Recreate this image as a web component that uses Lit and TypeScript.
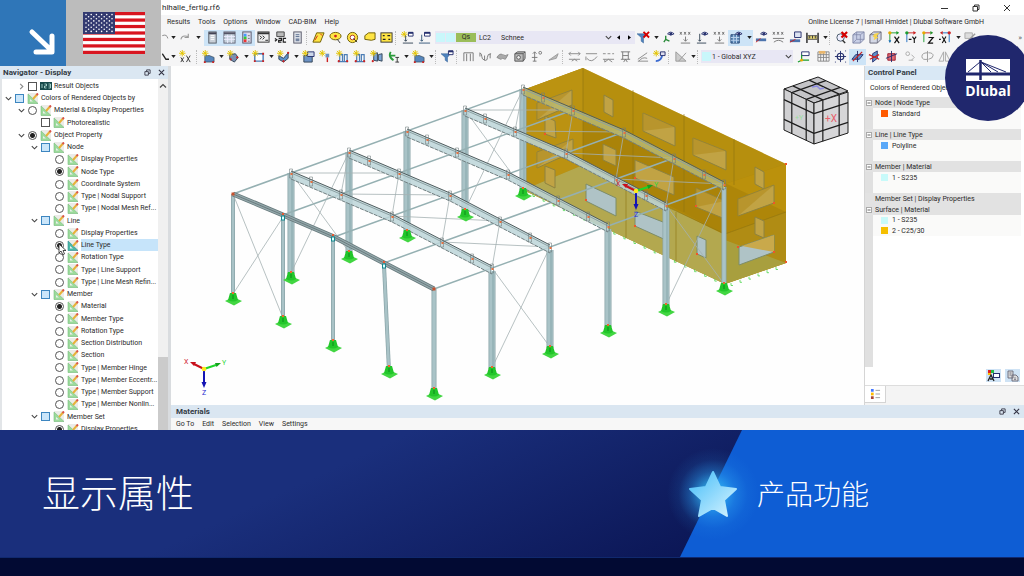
import { LitElement, html, svg, css } from "lit";
import { customElement } from "lit/decorators.js";
import { classMap } from "lit/directives/class-map.js";

type Pt = [number, number];
const pts = (p: Pt[]) => p.map((q) => q.join(",")).join(" ");

/* ---------- toolbar glyphs, all on a 14x14 grid ---------- */
const spark = svg`<path d="M3.5 0v7M0 3.5h7M1 1l5 5M6 1l-5 5" stroke="#e3c400" stroke-width="1"/>`;
const eye = svg`<path d="M6 3q3-3.500 7 0q-3.500 3-7 0z" fill="#fff" stroke="#26306e"/><circle cx="9.500" cy="3" r="1.500" fill="#26306e"/>`;
const G: Record<string, unknown> = {
  undo: svg`<path d="M0 5q5-2 6 3" fill="none" stroke="#888"/>`,
  redo: svg`<path d="M2 9q1-5 8-3M10 3v4H6" fill="none" stroke="#999" stroke-width="1.200"/>`,
  panel: svg`<rect x="3" y="1" width="8" height="12" fill="#c9d0d8" stroke="#555c66"/><path d="M3 2.500h8" stroke="#445" stroke-width="2"/><path d="M5 5h4M5 7h4M5 9h4" stroke="#fff"/>`,
  grid: svg`<rect x="1" y="1" width="12" height="12" fill="#c7d3de" stroke="#667"/><path d="M1 2.500h12" stroke="#556" stroke-width="2"/><path d="M1 6h12M1 9h12M5 4v9M9 4v9" stroke="#eef"/>`,
  colors: svg`<rect x="3" y="1" width="9" height="12" fill="#dde" stroke="#556"/><path d="M4 3h3v3H4z" fill="#49f"/><path d="M4 6h3v3H4z" fill="#3c3"/><path d="M4 9h3v3H4z" fill="#e33"/><path d="M8.500 5h2M8.500 8h2M8.500 11h2" stroke="#777"/>`,
  console: svg`<rect x="1" y="1" width="12" height="11" fill="#eee" stroke="#333"/><path d="M1 2.500h12" stroke="#333" stroke-width="2"/><path d="M3 5l2 2-2 2M6 5l2 2-2 2M9 10h3" fill="none" stroke="#222"/>`,
  script: svg`<path d="M3 1h8v5H3z" fill="#bbb" stroke="#444"/><path d="M1 8l2 1.500L1 11M5 8h3v2H5v2h3M13 8h-3v4h3" fill="none" stroke="#222" stroke-width="1.300"/>`,
  doc: svg`<rect x="3" y="1" width="8" height="12" fill="#dfe3ea" stroke="#556"/><path d="M5 4h4M5 6h4" stroke="#566b8c"/><rect x="5" y="8" width="4" height="3" fill="#7484a0"/>`,
  para: svg`<path d="M5 2h8L9 12H1z" fill="#ffe544" stroke="#6b5a00"/><path d="M3 10l3-5M9 3l2 2" stroke="#c22"/>`,
  lasso: svg`<ellipse cx="7" cy="5.500" rx="6" ry="4" fill="#ffe544" stroke="#6b5a00"/><circle cx="7" cy="5.500" r="1.500" fill="#c22"/><path d="M9 9l3 4" stroke="#333"/>`,
  target: svg`<circle cx="7" cy="7" r="5.500" fill="#ffe544" stroke="#6b5a00"/><circle cx="7" cy="7" r="2.500" fill="#fff" stroke="#a33"/><path d="M8 8l4 4" stroke="#333"/>`,
  poly: svg`<path d="M2 5l4-3h7v7l-4 1-7-1z" fill="#ffe544" stroke="#6b5a00"/>`,
  ytable: svg`<rect x="1" y="2" width="12" height="10" fill="#ffe544" stroke="#333"/><path d="M3 5h2M8 5h3M3 9h3M9 9h2" stroke="#222" stroke-width="1.500"/>`,
  loadNew: svg`${spark}<path d="M2 13h11M5 5v6M3.500 9.500L5 11l1.500-1.500" fill="none" stroke="#345"/><path d="M8 1.500h5v4H8z" fill="#fff" stroke="#26306e"/><path d="M8 2h5" stroke="#26306e" stroke-width="2"/>`,
  load: svg`<path d="M1 13h12M4 4v7M2.500 9.500L4 11l1.500-1.500" fill="none" stroke="#357"/><path d="M7 1.500h6v4H7z" fill="#fff" stroke="#26306e"/><path d="M7 2h6" stroke="#26306e" stroke-width="2"/>`,
  filterX: svg`<path d="M0 3h10L7 7v6L4.500 11V7z" fill="#4f83bd" stroke="#2c5a8f" stroke-width=".5"/><path d="M7 1l6 6M13 1L7 7" stroke="#d40000" stroke-width="2"/>`,
  filter: svg`<path d="M0 4h10L7 8v5L4.500 11V8z" fill="#4f83bd" stroke="#2c5a8f" stroke-width=".5"/><path d="M8 1h5v4H8z" fill="#fff" stroke="#26306e"/><path d="M8 1.500h5" stroke="#26306e" stroke-width="2"/>`,
  eyeSup: svg`${eye}<path d="M4 5v4l-2 3M4 9l4 2" fill="none" stroke="#2a8a3a" stroke-width="1.500"/>`,
  xxx: svg`<path d="M1 1l2 3M3 1L1 4M5.500 1l2 3M7.500 1l-2 3M10 1l2 3M12 1l-2 3" stroke="#555" stroke-width=".8"/><path d="M7 6v5M5 9l2 2 2-2M2 13h10" fill="none" stroke="#777"/>`,
  eyeLoad: svg`${eye}<path d="M4 3v8M2.500 9.500L4 11l1.500-1.500M1 13h10" fill="none" stroke="#345"/>`,
  eyeGrid: svg`<path d="M1 4h9v9H1z" fill="#5b87b5" stroke="#2d4c78"/><path d="M4 4v9M7 4v9M1 7h9M1 10h9" stroke="#bcd4ee"/>${eye}`,
  eyeBeam: svg`${eye}<path d="M1 8h11v3H1z" fill="#4d74ad"/><path d="M1 12l5-4" stroke="#c22"/>`,
  xxxBeam: svg`<path d="M1 1l2 3M3 1L1 4M5.500 1l2 3M7.500 1l-2 3M10 1l2 3M12 1l-2 3" stroke="#555" stroke-width=".8"/><path d="M1 8h12M2 12q5-4 10 0" fill="none" stroke="#777"/>`,
  diag: svg`<path d="M6 1h7v6H6z" fill="#dce3f2" stroke="#26306e"/><path d="M1 9h11v3H1z" fill="#4d74ad"/><path d="M1 12l6-3" stroke="#c22"/>`,
  dims: svg`<path d="M1 2v11M13 2v11" stroke="#222" stroke-width="1.500"/><path d="M2 5h10v4H2z" fill="#e7d774" stroke="#555"/><path d="M4 5v3M7 5v3M10 5v3" stroke="#333"/>`,
  magX: svg`<circle cx="6" cy="7" r="4" fill="#eef" stroke="#456"/><path d="M8 10l3 3" stroke="#333" stroke-width="1.500"/><path d="M7 1l6 6M13 1L7 7" stroke="#d40000" stroke-width="2.400"/>`,
  cube: svg`<path d="M1 4l4-3h8v8l-4 4H1z" fill="#c8cfe6" stroke="#8087a8"/><path d="M1 4h8l4-3M9 4v9M5 1v8h8M5 9l-4 4" fill="none" stroke="#8087a8" stroke-width=".8"/>`,
  cubeY: svg`<path d="M1 4l4-3h8v8l-4 4H1z" fill="#d4d8e6" stroke="#667"/><path d="M1 4h8l4-3M9 4v9" fill="none" stroke="#667" stroke-width=".8"/><path d="M6 3l5-1-3 4 2 1-5 3 1-3-2-1z" fill="#f5d34a"/>`,
  axX: svg`<path d="M2 2v10M2 2h9" stroke="#1c9c2e"/><circle cx="2" cy="2" r="1.800" fill="#e8a800"/><path d="M9 0l3 2-3 2z" fill="#1c9c2e"/><path d="M.500 10l1.500 3 1.500-3z" fill="#1c6cc0"/><path d="M7 6l5 7M12 6l-5 7" stroke="#111" stroke-width="1.300"/>`,
  axY: svg`<path d="M2 2v10" stroke="#1c6cc0"/><path d="M2 2h9" stroke="#c22"/><circle cx="2" cy="2" r="1.800" fill="#1c9c2e"/><path d="M9 0l3 2-3 2z" fill="#c22"/><path d="M4 9h3M8 6l2 3 2-3M10 9v4" fill="none" stroke="#111" stroke-width="1.200"/>`,
  axZ: svg`<path d="M2 2v10" stroke="#1c9c2e"/><path d="M2 2h9" stroke="#c22"/><circle cx="2" cy="2" r="1.800" fill="#e8a800"/><path d="M9 0l3 2-3 2z" fill="#1c9c2e"/><path d="M7 7h5l-5 6h5" fill="none" stroke="#111" stroke-width="1.300"/>`,
  axNX: svg`<path d="M11 2v10M11 2H3" stroke="#1c6cc0"/><circle cx="11" cy="2" r="1.800" fill="#c22"/><path d="M4 0L1 2l3 2z" fill="#c22"/><path d="M0 9h2M3.500 6l4 7M7.500 6l-4 7" stroke="#111" stroke-width="1.200"/>`,
  faded: svg`<path d="M1 2h8v6H1z" fill="#ddd" stroke="#aaa"/><path d="M5 10l7-7" stroke="#999" stroke-width="1.500"/>`,
  lineNew: svg`<path d="M0 4l4 6h4" fill="none" stroke="#222" stroke-width="1.500"/>`,
  xxNew: svg`${spark}<path d="M2 8l3 5M5 8l-3 5M8 6l4 7M12 6l-4 7" stroke="#333"/>`,
  matNew: svg`<path d="M3 6h5l5 2v5H3z" fill="#5585bb" stroke="#345" stroke-width=".7"/><path d="M2 12h2v2H2zM11 12h2v2h-2z" fill="#c22"/>${spark}`,
  nodeNew: svg`<path d="M3 5l6-1 3 4-4 5-5-3z" fill="#7b90b3" stroke="#345"/><circle cx="4" cy="10" r="1.200" fill="#c22"/><circle cx="11" cy="8" r="1.200" fill="#c22"/>${spark}`,
  frameNew: svg`<path d="M3 4h9v8H3z" fill="#fff" stroke="#4b7db5" stroke-width="1.500"/><path d="M2 11h2v2H2zM11 11h2v2h-2zM11 3h2v2h-2z" fill="#c22"/>${spark}`,
  surfNew: svg`<path d="M2 6l5 3 5-6v6l-5 4-5-3z" fill="#5f93cc" stroke="#345"/><circle cx="7" cy="12" r="1.200" fill="#c22"/><circle cx="12" cy="3" r="1.200" fill="#c22"/>${spark}`,
  boxNew: svg`<path d="M2 6h9v7H2z" fill="#6c92c4" stroke="#345"/><path d="M6 2h7v5H6z" fill="#cdd7ea" stroke="#26306e"/>${spark}`,
  pinNew: svg`<path d="M7 4h4v4H7z" fill="#6c92c4"/><path d="M9 8v5" stroke="#c22" stroke-width="1.500"/>${spark}`,
  ribNew: svg`<path d="M4 12V5h3v7M9 12V5h3v7M2 12.500h11" fill="none" stroke="#4b7db5" stroke-width="1.300"/><circle cx="3" cy="12" r="1.200" fill="#c22"/><circle cx="12" cy="12" r="1.200" fill="#c22"/>${spark}`,
  wallNew: svg`<path d="M4 4l4-1v9l-4-1zM9 5l4-1v8l-4-1z" fill="#7da5d6" stroke="#345"/><circle cx="3" cy="12" r="1.200" fill="#c22"/>${spark}`,
  supNew: svg`<path d="M4 2q-3 5 3 9M4 6h5" fill="none" stroke="#2a9a3a" stroke-width="2"/><path d="M9 8h4M11 8v5M9 13h4" stroke="#333"/>`,
  gate: svg`<path d="M2 12V3h10v9M5 12V4M9 12V4" fill="none" stroke="#777"/>`,
  curve: svg`<path d="M1 3q2 1 2 4t3 4 3-3 4-4M1 3v4M12 4v5M6 6v5" fill="none" stroke="#777"/>`,
  slab: svg`<path d="M1 8q3-5 6-3t6 0l-3 5q-3-2-5 0z" fill="#aaa" stroke="#888"/>`,
  box: svg`<path d="M2 4h9v8H2zM2 4l3-2h8l-2 2M13 2v7l-2 3" fill="#bbb" stroke="#555"/><circle cx="6" cy="8" r="2" fill="#eee" stroke="#555"/>`,
  reac: svg`<path d="M5 2v10M3 4l2-2 2 2M2 8h6M3 12h4" fill="none" stroke="#777"/><circle cx="11" cy="3" r="1.500" fill="none" stroke="#777"/>`,
  slope: svg`<path d="M2 11l10-7-2 5z" fill="#bbb" stroke="#999"/>`,
  beam1: svg`<path d="M1 4h12M1 10h12M3 2L1 4l2 2M11 2l2 2-2 2M4 12l3-2 3 2" fill="none" stroke="#888"/>`,
  beam2: svg`<path d="M1 4h12M2 9q5 6 11-2M1 7v4" fill="none" stroke="#888"/>`,
  beam3: svg`<path d="M1 4h3M6 4h3M11 4h2M1 10h12M3 10v3l4-3 4 3" fill="none" stroke="#888"/>`,
  beam4: svg`<path d="M2 2h10M4 2v8M10 2v8M2 10h10M4 6h6M5 13l2-3 2 3" fill="none" stroke="#777"/>`,
  beam5: svg`<path d="M2 10L12 3M2 12h11M3 12q4-5 9-3" fill="none" stroke="#888"/>`,
  pen: svg`<path d="M3 12q6 0 7-7" fill="none" stroke="#3a6ad0" stroke-width="2"/><path d="M8 2h5v4H8z" fill="#dde" stroke="#26306e"/>${spark}`,
  tri: svg`<path d="M2 2v10h11zM5 12l8-9" fill="#ccc" stroke="#999"/>`,
  ucs: svg`<path d="M5 2h8v4H5z" fill="#fff" stroke="#26306e"/><path d="M5 5v6h8M5 11l-4 2" fill="none" stroke="#1a9c2e" stroke-width="1.300"/><circle cx="5" cy="11" r="1.500" fill="#e8a800"/>`,
  mesh: svg`<path d="M1 2h12v10H1zM1 5h12M1 8h12M4 2v10M7 2v10M10 2v10" fill="none" stroke="#888"/><path d="M2 1h7v3H2z" fill="#e9b66b"/>`,
  snap: svg`<circle cx="7" cy="7" r="3.500" fill="none" stroke="#26306e" stroke-width="1.300"/><path d="M7 1v12M1 7h12" stroke="#26306e"/><path d="M1 1h1M12 1h1M1 13h1M12 13h1" stroke="#26306e"/>`,
  plane1: svg`<path d="M1 10l4-5h8l-4 5z" fill="#5f93cc" stroke="#26306e"/><path d="M7 1v12" stroke="#26306e"/><path d="M2 12l10-10" stroke="#c22" stroke-width="1.300"/>`,
  plane2: svg`<path d="M5 4l5-3v8l-5 4z" fill="#5f93cc" stroke="#26306e"/><path d="M2 10l10-5M1 5l11 5" stroke="#c22" stroke-width="1.300"/>`,
  plane3: svg`<path d="M3 4h8v7H3z" fill="#e06a75" stroke="#9a1a2a"/><path d="M1 9l12-5M7 1v12" stroke="#26306e"/>`,
  rot: svg`<circle cx="4" cy="4" r="2" fill="none" stroke="#aaa"/><path d="M8 5l3 3-3 3M5 11h5" fill="none" stroke="#aaa"/>`,
  circ: svg`<path d="M7 3q-6 0-6 4t6 3M8 10q5-1 5-4T8 3M7 1v12" fill="none" stroke="#999"/>`,
  mirror: svg`<path d="M6 2v10H1zM8 2v10h5z" fill="none" stroke="#aaa"/>`,
};

type Item = string | number;
// a name draws its glyph button, a number leaves room, "v" is a caret, "|" a divider, "*" marks an active button
const ROW1A: Item[] = ["undo", "v", "redo", "v", 2, "*panel", "*grid", "*colors", "console", "script", "doc", "|", "para", "lasso", "target", "poly", "ytable", "|", "loadNew", "load", 2];
const ROW1B: Item[] = ["filterX", "v", "eyeSup", "xxx", "eyeLoad", "xxx", "*eyeGrid", "*v", "eyeBeam", "xxxBeam", "diag", "dims", "v", "|", "magX", "cube", "cubeY", 2, "axX", "axY", "axZ", "axNX", "v", "faded"];
const ROW2A: Item[] = ["lineNew", "v", "xxNew", 2, "|", "matNew", "v", "nodeNew", "v", "frameNew", "v", "surfNew", "v", "boxNew", "pinNew", "ribNew", "ribNew", "wallNew", "supNew", "v", "matNew", "v", "|", "filter", "|", "gate", "curve", "slab", "box", "reac", "slope", "|", "beam1", "beam2", "beam3", "beam4", "beam5", "pen", "|", "tri", "v", "|"];
const ROW2B: Item[] = [2, "ucs", 3, "mesh", "snap", "*plane1", "plane2", "plane3", 2, "rot", "circ", "mirror"];

const chevron = svg`<path d="M2 3.500l3 3 3-3" fill="none" stroke="#444" stroke-width="1.200"/>`;

@customElement("tool-strip")
export class ToolStrip extends LitElement {
  static properties = { items: { attribute: false } };
  declare items: Item[];
  static styles = css`
    :host { display: flex; align-items: center; flex: none; }
    button { border: 0; padding: 0; background: none; width: 17px; height: 16px; display: grid; place-items: center; flex: none; }
    .narrow { width: 8px; }
    .on { background: #cde4f7; }
    .bar { width: 4px; height: 14px; flex: none; border-left: 1px dotted #bbb; box-sizing: border-box; }
    .room { flex: none; }
  `;
  render() {
    return this.items.map((it) => {
      if (typeof it === "number") return html`<span class="room" style="width:${it}px"></span>`;
      if (it === "|") return html`<span class="bar"></span>`;
      const on = it.startsWith("*");
      const n = on ? it.slice(1) : it;
      if (n === "v")
        return html`<button class=${classMap({ narrow: true, on })} aria-label="More"><svg width="5" height="3" viewBox="0 0 6 4"><path d="M0 0h6L3 4z" fill="#222" /></svg></button>`;
      const narrow = n === "undo" || n === "lineNew";
      return html`<button class=${classMap({ narrow, on })} aria-label=${n}>
        <svg width=${narrow ? 7 : 13} height="13" viewBox=${narrow ? "0 0 7 14" : "0 0 14 14"}>${G[n]}</svg>
      </button>`;
    });
  }
}

/* ---------- 3D model ---------- */
const N = 6;
const OFF: Pt[] = [[0, 0], [20, 8], [50, 21], [101, 43], [151, 69], [181, 85], [201, 95]];
const at = (f: number, k: number): Pt => [233 + 58 * f + OFF[k][0], 194 - 21 * f + OFF[k][1]];
const COLH = 104;

@customElement("model-view")
export class ModelView extends LitElement {
  static styles = css`
    :host { display: block; overflow: hidden; background: #fefefe; }
    svg { display: block; width: 100%; height: 100%; }
    text { font: 7px Roboto, sans-serif; }
    .face { font-size: 10px; }
  `;
  line(a: Pt, b: Pt, c = "#a5b1b3", w = 0.8) {
    return svg`<line x1=${a[0]} y1=${a[1]} x2=${b[0]} y2=${b[1]} stroke=${c} stroke-width=${w}/>`;
  }
  support([x, y]: Pt) {
    return svg`<path d="M${x - 8} ${y + 3}l8-4 9 4-8 4.500z" fill="#42d642"/><path d="M${x - 3} ${y - 5}h6l2 7q-5 3-10 0z" fill="#22c62a"/><path d="M${x - 1} ${y - 3}h2v4h-2z" fill="#17a822"/><rect x=${x - 1} y=${y - 6} width="2" height="2" fill="#f2642c"/>`;
  }
  column(a: Pt, b: Pt, w: number) {
    return svg`${this.line(a, b, "#8ba5a9", w)}${this.line(a, b, "#a9c3c7", w - 1.5)}${w > 5 ? this.line([a[0] + 1, a[1]], [b[0] + 1, b[1]], "#93b0b4", 1.5) : ""}`;
  }
  beam(f: number) {
    const p = [0, 3, 6].map((k) => at(f, k));
    if (f === 0) {
      const q = pts([0, 2, 3, 4, 6].map((k) => at(0, k)));
      return svg`<polyline points=${q} fill="none" stroke="#67797c" stroke-width="5"/><polyline points=${q} fill="none" stroke="#93a8ab" stroke-width="3.500"/><polyline points=${q} fill="none" stroke="#617074" stroke-width=".8"/>`;
    }
    const sh = (d: number) => pts(p.map(([x, y]) => [x, y + d] as Pt));
    const body = f === 5 ? "#b9b76e" : "#bcd5d8";
    return svg`
      <polygon points="${sh(-2)} ${pts([...p].reverse().map(([x, y]) => [x, y + 6] as Pt))}" fill=${body} fill-opacity=".85"/>
      <polyline points=${sh(-2)} fill="none" stroke="#505c5e" stroke-width="1"/>
      <polyline points=${sh(0)} fill="none" stroke="#8ba0a2" stroke-width="1"/>
      <polyline points=${sh(6)} fill="none" stroke="#717f81" stroke-width="1" stroke-dasharray="4 1"/>
      ${OFF.map((_, k) => {
        const [x, y] = at(f, k);
        return svg`<path d="M${x - 1.5} ${y - 4}h3v9h-3z" fill="none" stroke="#6d7a7c" stroke-opacity=".8" stroke-width=".7"/><rect x=${x - 0.5} y=${y} width="2" height="2" fill="#e9703f"/>`;
      })}`;
  }
  brace(f: number) {
    const k = [0, 2, 3, 4, 6];
    const out: unknown[] = [];
    for (let i = 0; i < 4; i++) {
      out.push(this.line(at(f, k[i]), at(f + 1, k[i + 1])));
      out.push(this.line(at(f + 1, k[i]), at(f, k[i + 1])));
    }
    for (const s of [0, 6]) {
      const a = at(f, s), b = at(f + 1, s);
      out.push(this.line(a, [b[0], b[1] + COLH - 4]));
      out.push(this.line(b, [a[0], a[1] + COLH - 4]));
    }
    return out;
  }
  axes(x: number, y: number, s: number) {
    return svg`
      <path d="M${x} ${y}l-10-5" stroke="#c8101c" stroke-width="2"/><path d="M${x - 14} ${y - 7}l6 0-2 4z" fill="#c8101c"/>
      <path d="M${x} ${y}l12-4" stroke="#1ed42a" stroke-width="2"/><path d="M${x + 17} ${y - 6}l-6 0 1.500 4z" fill="#12a31c"/>
      <path d="M${x} ${y}v${s - 4}" stroke="#1414b4" stroke-width="2"/><path d="M${x - 2.5} ${y + s - 5}h5l-2.500 6z" fill="#1414b4"/>
      <circle cx=${x} cy=${y} r="2.300" fill="#ffe81a"/>
      <text x=${x - 20} y=${y - 5} fill="#d02030">X</text>
      <text x=${x + 18} y=${y - 4} fill="#34d840">Y</text>
      <text x=${x - 2} y=${y + s + 8} fill="#2a2ad0">Z</text>`;
  }
  cubeFace(o: Pt, u: Pt, v: Pt, fill: string) {
    const m = (a: number, b: number): Pt => [o[0] + u[0] * a + v[0] * b, o[1] + u[1] * a + v[1] * b];
    return svg`<polygon points=${pts([m(0, 0), m(1, 0), m(1, 1), m(0, 1)])} fill=${fill} stroke="#1c1c1c"/>
      ${[0.26, 0.74].map((t) => svg`${this.line(m(t, 0), m(t, 1), "#1c1c1c", 1.2)}${this.line(m(0, t), m(1, t), "#1c1c1c", 1.2)}`)}`;
  }
  render() {
    const gold: Pt[][] = [
      [[537, 103], [572, 90], [572, 105], [537, 120]],
      [[545, 116], [555, 121], [556, 138], [545, 134]],
      [[537, 152], [573, 139], [573, 152], [537, 168]],
      [[545, 166], [555, 170], [555, 188], [545, 183]],
      [[604, 95], [613, 100], [613, 117], [604, 112]],
      [[603, 144], [616, 150], [616, 166], [603, 160]],
      [[643, 113], [675, 127], [675, 146], [643, 131]],
      [[693, 138], [726, 151], [726, 170], [693, 155]],
      [[635, 160], [674, 177], [674, 195], [635, 178]],
      [[696, 188], [725, 201], [725, 219], [696, 207]],
      [[755, 167], [764, 172], [764, 189], [755, 184]],
      [[738, 199], [774, 185], [774, 203], [738, 216]],
      [[755, 217], [764, 221], [764, 238], [755, 234]],
    ];
    const blue: Pt[][] = [
      [[586, 184], [616, 198], [616, 216], [586, 201]],
      [[635, 211], [668, 224], [668, 241], [635, 226]],
      [[697, 236], [706, 240], [706, 258], [697, 254]],
      [[739, 247], [774, 235], [774, 252], [739, 265]],
    ];
    const frames = Array.from({ length: N }, (_, f) => f);
    const posts: [Pt, Pt][] = [[[283, 217], [283, 321]], [[333, 238], [333, 345]], [[384, 265], [389, 371]]];
    const feet = [...frames.map((f) => at(f, 0)), ...frames.map((f) => at(f, 6))].map(([x, y]) => [x, y + COLH] as Pt);
    return html`<svg viewBox="171 66 693 339" preserveAspectRatio="xMidYMid meet" role="img" aria-label="Steel hall model">
      <polygon points="523,90 583,68 786,164 786,263 725,284 523,190" fill="#b18a0c"/>
      <polygon points="523,90 583,68 583,165 523,190" fill="#bb9212"/>
      <polygon points="523,90 583,68 786,164 725,184" fill="#bc9310" opacity=".5"/>
      <polygon points="725,184 786,164 786,212 725,234" fill="#bb910c"/>
      <polygon points="583,116 786,212 725,234 670,206 583,165" fill="#a57f08" opacity=".6"/>
      <polygon points="523,190 583,165 725,235 725,284" fill="#b3a84f"/>
      <polygon points="725,234 786,212 786,263 725,284" fill="#b08c14"/>
      <polygon points="725,284 725,240 786,263" fill="#a6a64c" opacity=".75"/>
      <path d="M583 68V165M633 90V187M684 114V212M734 139V185M626 187V238M676 212V262M523 139l202 95 61-22" fill="none" stroke="#8d7413" stroke-width=".6"/>
      ${gold.map((w) => svg`<polygon points=${pts(w)} fill="#c1a344" stroke="#8d8240"/>`)}
      ${[0, 2, 6, 7, 9, 11].map((i) => svg`<polygon points=${pts([gold[i][0], gold[i][1], gold[i][3]])} fill="#b08b1c" opacity=".55"/>`)}
      ${blue.map((w) => svg`<polygon points=${pts(w)} fill="#afc3c6" stroke="#7d8c68"/>`)}
      <polygon points="742,246 774,235 774,252" fill="#c9a94b"/>
      ${Array.from({ length: 19 }, (_, i) => svg`<path d="M${533 + i * 10.1} ${194 + i * 4.7}v2.500h2" fill="none" stroke="#4fd64f" stroke-width=".8"/>`)}
      ${Array.from({ length: 6 }, (_, i) => svg`<path d="M${731 + i * 9} ${283 - i * 3.2}v2.500h2" fill="none" stroke="#4fd64f" stroke-width=".8"/>`)}
      ${[[545, 134], [586, 200], [696, 206], [697, 254], [738, 247], [774, 203], [774, 252], [786, 164], [786, 262], [635, 178], [635, 226]].map(([x, y]) => svg`<rect x=${x - 1} y=${y - 1} width="2" height="2" fill="#f0552a"/>`)}
      ${frames.map((f) => { const [x, y] = at(f, 0); return this.column([x, y], [x, y + COLH - 3], f ? 7 : 4); })}
      ${this.line(at(0, 0), [283, 318])}${this.line([283, 217], [233, 294])}
      ${[0, 2, 3, 4, 6].map((k) => this.line(at(0, k), at(5, k), "#95b0b2", 1.5))}
      ${this.brace(1)}${this.brace(4)}
      ${[5, 4, 3, 2, 1].map((f) => {
        const [x, y] = at(f, 6);
        return svg`${this.column([x, y + 3], [x, y + COLH - 3], f === 5 ? 5 : 7)}${this.beam(f)}`;
      })}
      ${posts.map(([a, b]) => svg`${this.column(a, b, 4)}${this.support(b)}`)}
      ${this.column(at(0, 6), [434, 390], 5)}
      ${this.beam(0)}
      ${posts.map(([a]) => svg`<rect x=${a[0] - 1.5} y=${a[1] - 1} width="3" height="4" fill="#dff" stroke="#12858c"/><rect x=${a[0] - 1} y=${a[1] - 4} width="2" height="2" fill="#e55a30"/>`)}
      ${feet.map((p) => this.support(p))}
      ${[[233, 194], [434, 289]].map(([x, y]) => svg`<rect x=${x - 1.5} y=${y - 1.5} width="3" height="3" fill="#c8502c"/>`)}
      ${this.axes(204, 369, 18)}
      ${this.axes(636, 191, 18)}
      ${this.cubeFace([784, 89], [34, -12], [30, 14], "#c4c4c7")}
      ${this.cubeFace([784, 89], [30, 14], [0, 41], "#d0d0d2")}
      ${this.cubeFace([814, 103], [34, -11], [0, 41], "#d6d6d8")}
      <text class="face" x="825" y="122" fill="#e8606a">+X</text>
      <text x="795" y="120" fill="#9adf9f">+Y</text>
      <path d="M812 87l5-1 3 3 4-1" fill="none" stroke="#8a8ae0" stroke-width="1.500"/>
    </svg>`;
  }
}

/* ---------- navigator ---------- */
type Row = { l: number; t: string; k: "c" | "r"; on?: boolean; ch?: "open" | "shut"; blue?: boolean; sel?: boolean; num?: boolean; g?: string };
const rad = (t: string, g: string, on = false, sel = false): Row => ({ l: 3, t, k: "r", g, on, sel });
const box = (l: number, t: string): Row => ({ l, t, k: "c", ch: "open", blue: true });
const TREE: Row[] = [
  { l: 1, t: "Result Objects", k: "c", ch: "shut", num: true },
  box(0, "Colors of Rendered Objects by"),
  { l: 1, t: "Material & Display Properties", k: "r", ch: "open", g: "by" },
  { l: 2, t: "Photorealistic", k: "c" },
  { l: 1, t: "Object Property", k: "r", ch: "open", on: true, g: "by" },
  box(2, "Node"),
  rad("Display Properties", "node"), rad("Node Type", "node", true), rad("Coordinate System", "node"), rad("Type | Nodal Support", "node"), rad("Type | Nodal Mesh Ref...", "node"),
  box(2, "Line"),
  rad("Display Properties", "line"), rad("Line Type", "line", true, true), rad("Rotation Type", "line"), rad("Type | Line Support", "line"), rad("Type | Line Mesh Refin...", "line"),
  box(2, "Member"),
  rad("Material", "member", true), rad("Member Type", "member"), rad("Rotation Type", "member"), rad("Section Distribution", "member"), rad("Section", "member"), rad("Type | Member Hinge", "member"), rad("Type | Member Eccentr...", "member"), rad("Type | Member Support", "member"), rad("Type | Member Nonlin...", "member"),
  box(2, "Member Set"),
  rad("Display Properties", "set", true),
];

const winBtns = html`<svg width="7" height="7" viewBox="0 0 8 8"><path d="M1 3h4v4H1zM3 3V1h4v4H5" fill="none" stroke="#334" /></svg>
  <svg width="7" height="7" viewBox="0 0 8 8"><path d="M1 1l6 6M7 1L1 7" stroke="#334" stroke-width="1.300" /></svg>`;

@customElement("nav-panel")
export class NavPanel extends LitElement {
  static styles = css`
    :host { display: flex; flex-direction: column; min-height: 0; background: #fff; border-right: 3px solid #d9dcdf; box-sizing: border-box; }
    .head { display: flex; align-items: center; gap: 7px; height: 13px; padding: 0 3px; background: #dbe7f2; font-size: 8px; font-weight: 700; flex: none; color: #333b44; }
    h2 { font: inherit; margin: 0; flex: 1; }
    .body { display: flex; flex: 1; min-height: 0; overflow: hidden; border-left: 2px solid #e2e5e8; }
    ul { list-style: none; margin: 0; padding: 1px 0 0; flex: 1; min-width: 0; display: grid; grid-auto-rows: 12px 12px 12px 13px; align-content: start; }
    li { display: flex; align-items: center; min-width: 0; }
    .l1 { padding-left: 13px; } .l2 { padding-left: 26px; } .l3 { padding-left: 40px; }
    .chev { width: 12px; display: grid; place-items: center; flex: none; }
    input { appearance: none; width: 9px; height: 9px; margin: 0 3px 0 1px; border: 1px solid #555; box-sizing: border-box; flex: none; background: #fff; }
    input[type="radio"] { border-radius: 50%; }
    input[type="radio"]:checked { background: radial-gradient(circle, #222 0 2px, #fff 3px); }
    .blue { background: #cbe6fa; border-color: #3d86c0; }
    label { display: flex; align-items: center; gap: 2px; flex: 1; min-width: 0; white-space: nowrap; height: 12px; font-size: 7px; line-height: 12px; color: #2a2a2a; }
    label svg { flex: none; }
    .sel span { background: #c6e4fa; flex: 1; }
    .scroll { width: 10px; background: #f0f0f0; display: flex; flex-direction: column; align-items: center; justify-content: space-between; padding-top: 4px; flex: none; }
    .thumb { width: 10px; height: 21%; background: #cbcbcb; }
  `;
  icon(sel?: boolean) {
    return html`<svg width="12" height="11" viewBox="0 0 12 11"><rect x="1" y="0" width="10" height="11" fill="#ecece8" /><path d="M1 1v9.500h10z" fill=${sel ? "#4bb8a6" : "#9bdb9b"} stroke=${sel ? "#2c8b96" : "#78bd80"} stroke-width=".6" /><path d="M3 6v2.500h3z" fill="#eee" /><path d="M6 6l4-4.500" stroke="#e8b23a" stroke-width="2" /><path d="M9.500 2l1.500-1.500" stroke="#d9534a" stroke-width="2" /></svg>`;
  }
  render() {
    return html`<div class="head"><h2>Navigator - Display</h2>${winBtns}</div>
      <div class="body">
        <ul>
          ${TREE.map((r, i) => html`<li class="l${r.l}">
            <span class="chev">${r.ch ? html`<svg width="9" height="9" viewBox="0 0 10 10">${r.ch === "open" ? chevron : svg`<path d="M3.500 2l3 3-3 3" fill="none" stroke="#888" stroke-width="1.200"/>`}</svg>` : ""}</span>
            <input id="n${i}" type=${r.k === "c" ? "checkbox" : "radio"} name=${r.g ?? "n" + i} class=${classMap({ blue: !!r.blue })} ?checked=${!!r.on} />
            <label for="n${i}" class=${classMap({ sel: !!r.sel })}>
              ${r.num ? html`<svg width="12" height="8" viewBox="0 0 12 8"><rect width="12" height="8" fill="#16494a" /><path d="M2 2v4M4.500 2h2v2h-2v2h2M8.500 2h2v4h-2M8.500 4h2" fill="none" stroke="#bfe9df" stroke-width=".8" /></svg>` : this.icon(r.sel)}<span>${r.t}</span>
            </label>
          </li>`)}
        </ul>
        <div class="scroll"><svg width="8" height="6" viewBox="0 0 8 6"><path d="M1 4.500l3-3 3 3" fill="none" stroke="#444" stroke-width="1.200" /></svg><div class="thumb"></div></div>
      </div>`;
  }
}

/* ---------- control panel ---------- */
type Cp = { h?: string; c?: string; t?: string; open?: boolean };
const CP: Cp[] = [
  { h: "Node | Node Type", open: true }, { c: "#ff5a00", t: "Standard" }, {},
  { h: "Line | Line Type", open: true }, { c: "#5aa8f8", t: "Polyline" }, {},
  { h: "Member | Material", open: true }, { c: "#c8fafa", t: "1 - S235" }, {},
  { h: "Member Set | Display Properties" },
  { h: "Surface | Material", open: true }, { c: "#c8fafa", t: "1 - S235" }, { c: "#f5bf00", t: "2 - C25/30" },
];

@customElement("control-panel")
export class ControlPanel extends LitElement {
  static styles = css`
    :host { display: flex; flex-direction: column; min-height: 0; font-size: 7px; color: #2a2a2a; background: #fff; border-left: 1px solid #d5d5d5; box-sizing: border-box; }
    h2 { margin: 0; font-size: 8px; font-weight: 700; line-height: 14px; padding: 0 3px; background: #d9e8f5; color: #333b44; }
    p { margin: 0; line-height: 17px; padding-left: 5px; white-space: nowrap; }
    .list { flex: 1; min-height: 0; margin: 0 3px 19px 0; display: grid; grid-auto-rows: 11px 11px 10px; align-content: start; background: linear-gradient(90deg, #e0e0e0 0 8px, #fff 8px); }
    .list > div { display: flex; align-items: center; white-space: nowrap; line-height: 10px; margin-left: 8px; }
    .list > .h { margin-left: 0; background: #e2e2e2; gap: 3px; padding-left: 1px; }
    .h svg, .h i { width: 6px; height: 6px; flex: none; }
    .row { gap: 4px; padding-left: 8px; background: #fafaf9; }
    .sw { width: 7px; height: 7px; }
    .tools { display: flex; justify-content: flex-end; gap: 4px; padding: 0 4px 3px; margin-top: -17px; }
    button { border: 0; padding: 0; background: #cfe3f5; width: 15px; height: 13px; display: grid; place-items: center; }
    .tabs { background: #f4f4f4; height: 20px; border-top: 1px solid #ddd; box-sizing: border-box; flex: none; }
    .tab { background: #fff; width: 21px; height: 17px; border: solid #d4d4d4; border-width: 0 1px 1px 0; }
  `;
  render() {
    return html`<h2>Control Panel</h2>
      <p>Colors of Rendered Objects by</p>
      <div class="list">
        ${CP.map((r) => r.h
          ? html`<div class="h">${r.open ? html`<svg viewBox="0 0 6 6"><rect x=".5" y=".5" width="5" height="5" fill="#fff" stroke="#aaa" /><path d="M1.500 3h3" stroke="#666" /></svg>` : html`<i></i>`}${r.h}</div>`
          : html`<div class="row">${r.t ? html`<span class="sw" style="background:${r.c}"></span>${r.t}` : ""}</div>`)}
      </div>
      <div class="tools">
        <button aria-label="Edit colors"><svg width="13" height="12" viewBox="0 0 13 12"><path d="M1 0h3v3H1z" fill="#d22" /><path d="M4 0h3v3H4z" fill="#2b4" /><path d="M1 3h3v2H1z" fill="#fb0" /><path d="M1 11l3-6 3 6M3 9h3" fill="none" stroke="#222" stroke-width="1.300" /><rect x="6.500" y="3.500" width="6" height="4" fill="#fff" stroke="#26306e" /></svg></button>
        <button aria-label="Copy settings"><svg width="12" height="12" viewBox="0 0 12 12"><path d="M1 1h5v7H1zM2.500 3h2M2.500 5h2M5 5h4l2 2v4H5z" fill="#ddd" stroke="#667" stroke-width=".9" /><path d="M7 8h2M7 9.500h2" stroke="#667" stroke-width=".7" /></svg></button>
      </div>
      <div class="tabs"><button class="tab" aria-label="Legend"><svg width="11" height="10" viewBox="0 0 12 11"><path d="M1 0h3v3H1z" fill="#47f" /><path d="M1 4h3v3H1z" fill="#fb0" /><path d="M1 8h3v3H1z" fill="#a43" /><path d="M6 1.500h5M6 5.500h5M6 9.500h5" stroke="#999" /></svg></button></div>`;
  }
}

/* ---------- page ---------- */
@customElement("app-root")
export class AppRoot extends LitElement {
  static styles = css`
    :host { display: flex; flex-direction: column; height: 100vh; overflow: hidden; position: relative; background: #020a33; font-family: Roboto, "Noto Sans CJK SC", sans-serif; font-size: 7px; color: #2a2a2a; }
    button { font: inherit; color: inherit; border: 0; background: none; padding: 0; }
    .top { display: flex; height: 66px; flex: none; background: #f5f5f6; }
    .mark { width: 66px; background: #2f76b8; display: grid; place-items: center; padding: 18px 0 0 18px; box-sizing: border-box; flex: none; }
    .flag { width: 95px; background: #bcbcbc; display: grid; place-items: center; flex: none; }
    .chrome { flex: 1; min-width: 0; display: flex; flex-direction: column; overflow: hidden; }
    .title { height: 15px; background: #fff; display: flex; align-items: center; justify-content: space-between; padding: 0 12px 0 1px; font-size: 8px; }
    .wins { display: flex; gap: 21px; }
    .menu { height: 13px; display: flex; align-items: center; gap: 8px; padding: 0 40px 0 6px; white-space: nowrap; }
    .menu .lic { margin-left: auto; }
    .bar { height: 19px; display: flex; align-items: center; }
    .combo { display: flex; align-items: center; background: #e8e7f4; height: 13px; flex: none; }
    .case { width: 200px; }
    .cs { width: 92px; }
    .chip { width: 9px; height: 9px; background: #c9f7fb; margin-left: 1px; flex: none; }
    .qs { background: #9bbd5a; width: 20px; line-height: 9px; text-align: center; margin: 0 3px 0 1px; }
    .num { width: 22px; }
    .cs .chip { margin: 0 1px; }
    select { appearance: none; border: 0; background: none; font: inherit; color: inherit; padding: 0; margin: 0; flex: 1; min-width: 0; }
    .step { width: 11px; display: grid; place-items: center; }
    .more { margin-left: auto; padding-right: 2px; color: #666; font-size: 8px; }
    .work { flex: 1; min-height: 0; display: grid; grid-template-columns: 171px minmax(0, 1fr) 160px; grid-template-rows: minmax(0, 1fr) 25px; }
    nav-panel { grid-row: 1 / 3; }
    .mat { grid-column: 2 / 4; background: #f7f7f7; }
    .mhead { display: flex; align-items: center; gap: 7px; height: 13px; background: #dae6f1; padding: 0 4px 0 5px; }
    h2 { margin: 0; font-size: 8px; flex: 1; color: #333b44; }
    .mmenu { display: flex; gap: 8px; padding-left: 5px; height: 12px; align-items: center; }
    .banner { height: 128px; flex: none; display: flex; background: linear-gradient(155deg, #1a2f7c 0 32%, #0a1452 78%, #13236c); border-bottom: 1px solid #10296e; box-sizing: border-box; color: #fff; font-family: "Noto Sans CJK SC", sans-serif; font-weight: 300; }
    h1 { flex: 1; margin: 0; padding-left: 42px; font-size: 38px; font-weight: 300; line-height: 122px; }
    .kind { position: relative; width: 344px; display: flex; align-items: center; font-size: 28px; line-height: 124px; }
    .kind::before { content: ""; position: absolute; inset: 0; background: #0e5dd4; clip-path: polygon(62px 0, 100% 0, 100% 100%, 0 100%); }
    .kind > * { position: relative; }
    .kind svg { margin-left: -17px; margin-right: -6px; flex: none; }
    .kind span { margin-top: -2px; }
    .foot { height: 18px; flex: none; }
    .logo { position: absolute; top: 35px; right: -7px; width: 86px; height: 86px; border-radius: 50%; background: #20276d; color: #fff; display: flex; flex-direction: column; align-items: center; padding-top: 24px; box-sizing: border-box; }
    .logo strong { font-family: "Open Sans", sans-serif; font-size: 14px; line-height: 20px; }
    .cursor { position: absolute; left: 58px; top: 243px; }
  `;
  flag() {
    return html`<svg width="62" height="42" viewBox="0 0 62 42" role="img" aria-label="English">
      <rect width="62" height="42" fill="#fff" />
      ${[0, 1, 2, 3, 4, 5, 6].map((i) => svg`<rect y=${i * 6.46} width="62" height="3.230" fill="#d8151f"/>`)}
      <rect width="32" height="22" fill="#333a70" />
      ${[0, 1, 2, 3, 4, 5, 6, 7, 8].map((r) => (r % 2 ? [1, 2, 3, 4, 5] : [0, 1, 2, 3, 4, 5]).map((c) => svg`<circle cx=${(r % 2 ? 0.4 : 3) + c * 5.2} cy=${2.6 + r * 2.1} r=".8" fill="#fff"/>`))}
    </svg>`;
  }
  render() {
    const down = html`<svg width="9" height="9" viewBox="0 0 10 10">${chevron}</svg>`;
    return html`
      <header class="top">
        <div class="mark"><svg width="28" height="28" viewBox="0 0 28 28"><path d="M4 4l20 19M24 8v16H8" fill="none" stroke="#fff" stroke-width="5" stroke-linecap="round" stroke-linejoin="round" /></svg></div>
        <div class="flag">${this.flag()}</div>
        <div class="chrome">
          <div class="title"><span>hlhalle_fertig.rf6</span>
            <div class="wins">
              <svg width="10" height="10" viewBox="0 0 10 10"><path d="M1 5.500h7" stroke="#333" /></svg>
              <svg width="10" height="10" viewBox="0 0 10 10"><path d="M2 3.500h4.500V8H2zM3.500 3.500V2H8v4.500H6.500" fill="none" stroke="#333" /></svg>
              <svg width="10" height="10" viewBox="0 0 10 10"><path d="M2 2l6 6M8 2L2 8" stroke="#333" /></svg>
            </div>
          </div>
          <nav class="menu">${["Results", "Tools", "Options", "Window", "CAD-BIM", "Help"].map((m) => html`<button>${m}</button>`)}<span class="lic">Online License 7 | Ismail Hmidet | Dlubal Software GmbH</span></nav>
          <div class="bar">
            <tool-strip .items=${ROW1A}></tool-strip>
            <div class="combo case"><i class="chip"></i><i class="chip"></i><span class="qs">Qs</span><span class="num">LC2</span><select aria-label="Load case"><option>Schnee</option></select>${down}
              <button class="step" aria-label="Previous"><svg width="3" height="5" viewBox="0 0 4 6"><path d="M4 0v6L0 3z" /></svg></button><button class="step" aria-label="Next"><svg width="3" height="5" viewBox="0 0 4 6"><path d="M0 0v6l4-3z" /></svg></button></div>
            <tool-strip .items=${ROW1B}></tool-strip><span class="more">»</span>
          </div>
          <div class="bar">
            <tool-strip .items=${ROW2A}></tool-strip>
            <div class="combo cs"><i class="chip"></i><select aria-label="Coordinate system"><option>1 - Global XYZ</option></select>${down}</div>
            <tool-strip .items=${ROW2B}></tool-strip>
          </div>
        </div>
      </header>
      <main class="work">
        <nav-panel></nav-panel>
        <model-view></model-view>
        <control-panel></control-panel>
        <section class="mat">
          <div class="mhead"><h2>Materials</h2>${winBtns}</div>
          <div class="mmenu">${["Go To", "Edit", "Selection", "View", "Settings"].map((m) => html`<button>${m}</button>`)}</div>
        </section>
      </main>
      <section class="banner">
        <h1>显示属性</h1>
        <div class="kind">
          <svg width="100" height="100" viewBox="-50 -50 100 100">
            <defs><radialGradient id="glow"><stop offset=".2" stop-color="#31b4f2" stop-opacity=".85" /><stop offset=".5" stop-color="#2a9df0" stop-opacity=".4" /><stop offset=".75" stop-color="#2a9df0" stop-opacity=".1" /><stop offset="1" stop-color="#2a9df0" stop-opacity="0" /></radialGradient>
              <linearGradient id="face" x1="0" y1="0" x2="1" y2="1"><stop offset=".2" stop-color="#62c8fa" /><stop offset="1" stop-color="#d8f4ff" /></linearGradient></defs>
            <circle r="46" fill="url(#glow)" />
            <path d="M0-22L7-7 23-5 11 6 14 22 0 14-14 22-11 6-23-5-7-7z" fill="url(#face)" stroke="url(#face)" stroke-width="2" stroke-linejoin="round" />
          </svg>
          <span>产品功能</span>
        </div>
      </section>
      <div class="foot"></div>
      <div class="logo">
        <svg width="44" height="22" viewBox="0 0 44 22"><rect width="44" height="22" fill="#fff" /><path d="M0 13.500h44v3H0z" fill="#20276d" /><path d="M14.500 1v20" stroke="#20276d" stroke-width="2.500" /><path d="M14 3L2 13M15 3l10 10M15 3l17 10M15 3l25 10" stroke="#20276d" fill="none" /></svg>
        <strong>Dlubal</strong>
      </div>
      <svg class="cursor" width="9" height="13" viewBox="0 0 9 13"><path d="M1 1v9l2-2 2 4 1.500-1L5 7.500h3z" fill="#fff" stroke="#222" stroke-width=".8" /></svg>
    `;
  }
}
